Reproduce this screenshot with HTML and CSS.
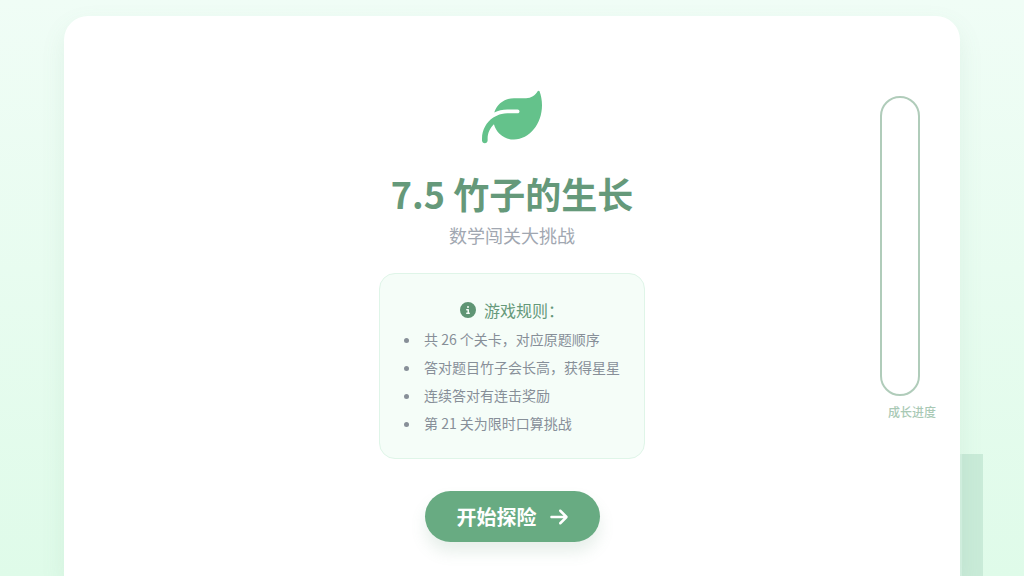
FILE: index.html
```html
<!DOCTYPE html>
<html lang="zh-CN">
<head>
    <meta charset="UTF-8">
    <meta name="viewport" content="width=device-width, initial-scale=1.0">
    <title>7.5 竹子的生长</title>
    <link rel="stylesheet" href="styles.css">
</head>
<body>

    <div class="bamboo"></div>

    <div class="card">
        <div class="start">
            <svg class="leaf" viewBox="0 0 512 512"><path d="M272 96c-78.6 0-145.1 51.5-167.7 122.5c33.6-17 71.5-26.5 111.7-26.5h88c8.8 0 16 7.2 16 16s-7.2 16-16 16H288 216c-16.6 0-32.7 1.900-48.200 5.400c-25.900 5.900-50 16.400-71.400 30.700C38.300 298.800 0 364.900 0 440v16c0 13.300 10.700 24 24 24s24-10.700 24-24V440c0-48.700 20.700-92.500 53.800-123.200C121.600 392.300 190.300 448 272 448l1 0c132.100-.7 239-130.900 239-291.400c0-42.600-7.500-83.100-21.100-119.600c-2.600-6.900-12.700-6.600-16.200 0C455.900 72.100 418.700 96 376 96L272 96z"/></svg>
            <h1>7.5 竹子的生长</h1>
            <p class="subtitle">数学闯关大挑战</p>

            <div class="rules">
                <h2>
                    <svg class="info" viewBox="0 0 512 512"><path d="M256 512A256 256 0 1 0 256 0a256 256 0 1 0 0 512zM216 336h24V272H216c-13.300 0-24-10.700-24-24s10.700-24 24-24h48c13.300 0 24 10.700 24 24v88h8c13.300 0 24 10.700 24 24s-10.700 24-24 24H216c-13.300 0-24-10.700-24-24s10.700-24 24-24zm40-208a32 32 0 1 1 0 64 32 32 0 1 1 0-64z"/></svg>
                    游戏规则：
                </h2>
                <ul>
                    <li>共 26 个关卡，对应原题顺序</li>
                    <li>答对题目竹子会长高，获得星星</li>
                    <li>连续答对有连击奖励</li>
                    <li>第 21 关为限时口算挑战</li>
                </ul>
            </div>

            <button class="go">
                开始探险
                <svg class="arrow" viewBox="0 0 448 512"><path d="M438.600 278.600c12.500-12.500 12.500-32.800 0-45.300l-160-160c-12.500-12.500-32.800-12.500-45.300 0s-12.500 32.800 0 45.300L338.800 224 32 224c-17.700 0-32 14.300-32 32s14.300 32 32 32l306.700 0L233.400 393.400c-12.500 12.500-12.500 32.800 0 45.300s32.800 12.500 45.300 0l160-160z"/></svg>
            </button>
        </div>

        <div class="progress">
            <div class="tube"></div>
            <span class="progress-label">成长进度</span>
        </div>
    </div>

</body>
</html>
```

FILE: styles.css
```css
* {
    box-sizing: border-box;
}
html, body {
    height: 100%;
}
body {
    margin: 0;
    padding-top: 16px;
    overflow: hidden;
    position: relative;
    font-family: "Noto Sans CJK SC", "Noto Sans", sans-serif;
    background: linear-gradient(180deg, #f0fdf6 0%, #dffbe9 100%);
    color: #6b7280;
}
.bamboo {
    position: absolute;
    left: 940px;
    top: 454px;
    width: 43px;
    height: 122px;
    background: linear-gradient(90deg, #d5f2e2 22px, #c9ebd8 22px);
}
.card {
    position: relative;
    width: 896px;
    height: 560px;
    margin: 0 auto;
    background-color: #ffffff;
    border-radius: 24px 24px 0 0;
    box-shadow: 0 10px 25px rgba(95, 149, 116, 0.1);
}
.start {
    display: flex;
    flex-direction: column;
    align-items: center;
    padding-top: 71px;
}
.leaf {
    width: 60px;
    height: 60px;
    fill: #64c28b;
}
h1 {
    margin: 26px 0 0;
    font-size: 36px;
    line-height: 40px;
    font-weight: 700;
    color: #65997a;
}
.subtitle {
    margin: 8px 0 0;
    font-size: 18px;
    line-height: 28px;
    color: #a1a7b1;
}
.rules {
    width: 266px;
    margin-top: 24px;
    padding: 24px 24px 25px;
    background-color: #f5fdf8;
    border: 1px solid #dff5e8;
    border-radius: 16px;
}
h2 {
    display: flex;
    justify-content: center;
    align-items: center;
    gap: 8px;
    margin: 0 0 7px;
    font-size: 16px;
    line-height: 24px;
    font-weight: 400;
    color: #65997a;
}
.info {
    width: 16px;
    height: 16px;
    fill: #5f9574;
}
ul {
    margin: 0;
    padding: 0;
    list-style-position: inside;
    font-size: 14px;
    line-height: 20px;
    color: #878f98;
}
li {
    margin-top: 8px;
}
li:first-child {
    margin-top: 0;
}
.go {
    display: flex;
    align-items: center;
    gap: 13px;
    height: 51px;
    margin-top: 32px;
    padding: 0 32px;
    border: none;
    border-radius: 26px;
    background-color: #68ab82;
    color: #fff;
    font-family: inherit;
    font-size: 20px;
    font-weight: 700;
    box-shadow: 0 10px 15px rgba(95, 149, 116, 0.15);
}
.arrow {
    width: 18px;
    height: 20px;
    fill: #fff;
}
.progress {
    position: absolute;
    top: 80px;
    right: 24px;
    display: flex;
    flex-direction: column;
    align-items: flex-end;
    gap: 8px;
}
.tube {
    width: 40px;
    height: 300px;
    margin-right: 16px;
    background-color: #fff;
    border: 2px solid #b0ccba;
    border-radius: 20px;
}
.progress-label {
    font-size: 12px;
    line-height: 16px;
    font-weight: 500;
    color: #a9c9b5;
}
```
